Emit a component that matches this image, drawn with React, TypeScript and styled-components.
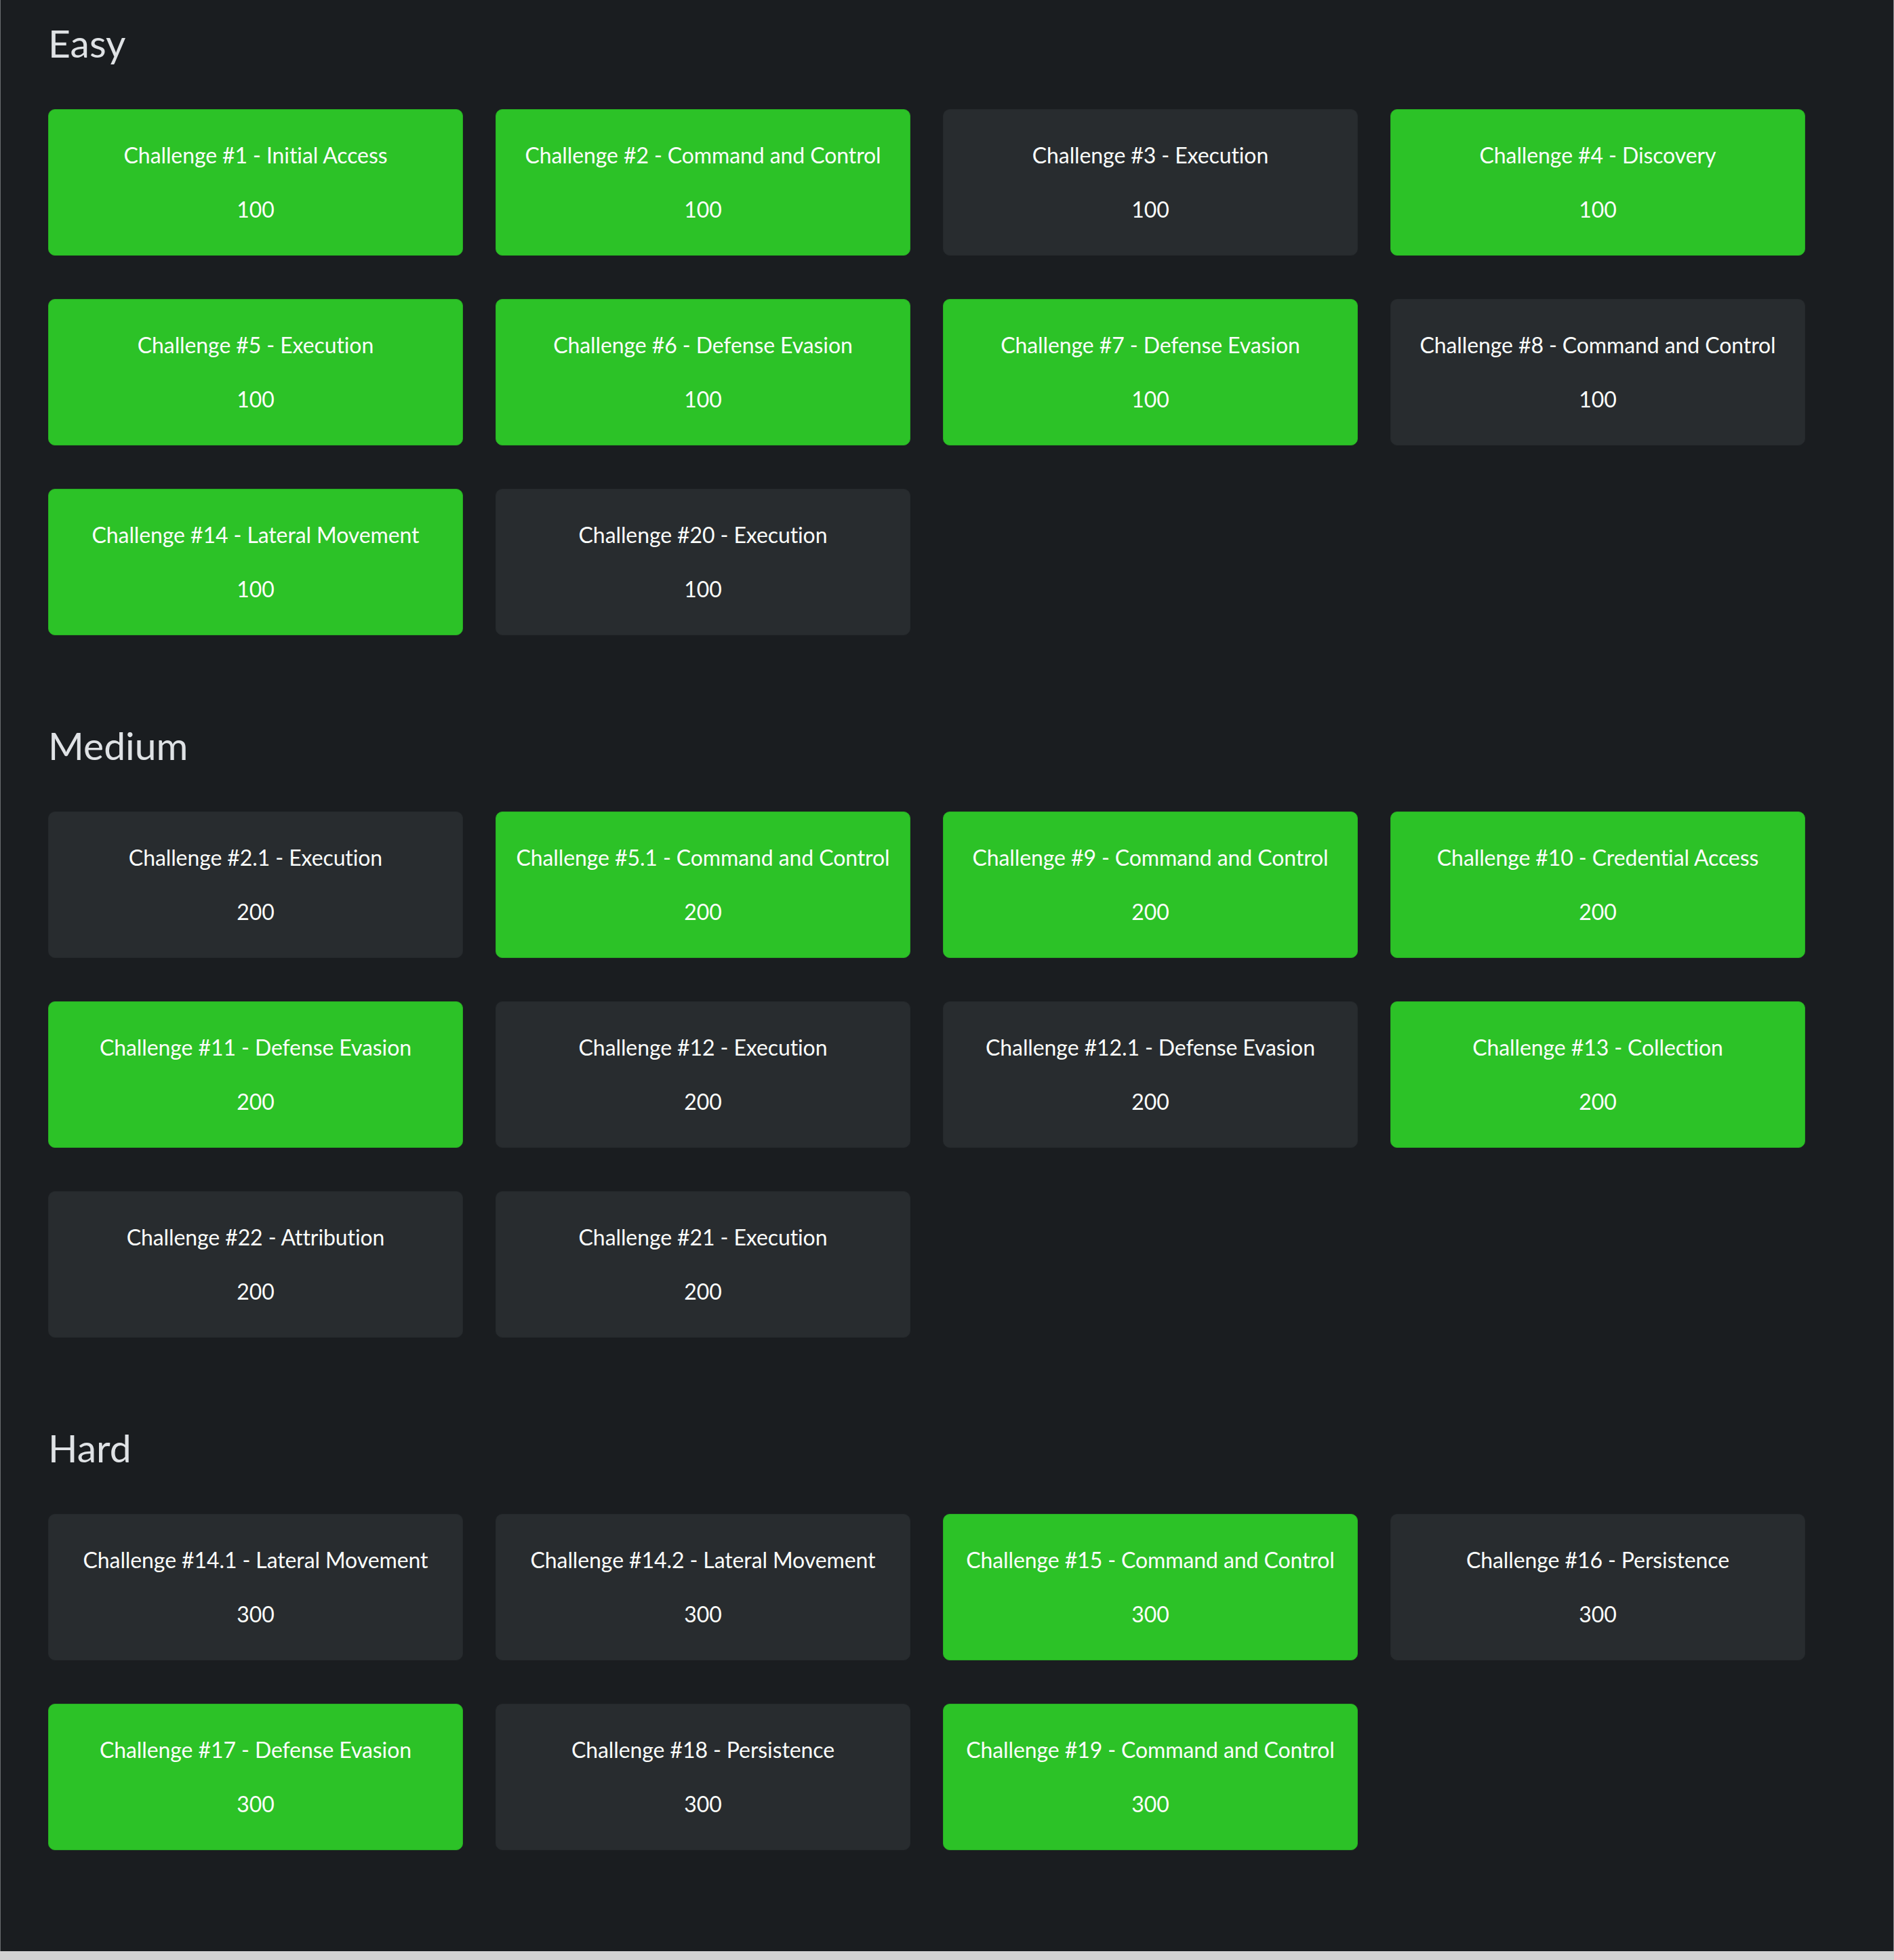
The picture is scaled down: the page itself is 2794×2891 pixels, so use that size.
import styled, { createGlobalStyle } from "styled-components";

type Challenge = {
  id: string;
  name: string;
  solved: boolean;
};

type Category = {
  title: string;
  value: number;
  challenges: Challenge[];
};

const categories: Category[] = [
  {
    title: "Easy",
    value: 100,
    challenges: [
      { id: "1", name: "Initial Access", solved: true },
      { id: "2", name: "Command and Control", solved: true },
      { id: "3", name: "Execution", solved: false },
      { id: "4", name: "Discovery", solved: true },
      { id: "5", name: "Execution", solved: true },
      { id: "6", name: "Defense Evasion", solved: true },
      { id: "7", name: "Defense Evasion", solved: true },
      { id: "8", name: "Command and Control", solved: false },
      { id: "14", name: "Lateral Movement", solved: true },
      { id: "20", name: "Execution", solved: false },
    ],
  },
  {
    title: "Medium",
    value: 200,
    challenges: [
      { id: "2.1", name: "Execution", solved: false },
      { id: "5.1", name: "Command and Control", solved: true },
      { id: "9", name: "Command and Control", solved: true },
      { id: "10", name: "Credential Access", solved: true },
      { id: "11", name: "Defense Evasion", solved: true },
      { id: "12", name: "Execution", solved: false },
      { id: "12.1", name: "Defense Evasion", solved: false },
      { id: "13", name: "Collection", solved: true },
      { id: "22", name: "Attribution", solved: false },
      { id: "21", name: "Execution", solved: false },
    ],
  },
  {
    title: "Hard",
    value: 300,
    challenges: [
      { id: "14.1", name: "Lateral Movement", solved: false },
      { id: "14.2", name: "Lateral Movement", solved: false },
      { id: "15", name: "Command and Control", solved: true },
      { id: "16", name: "Persistence", solved: false },
      { id: "17", name: "Defense Evasion", solved: true },
      { id: "18", name: "Persistence", solved: false },
      { id: "19", name: "Command and Control", solved: true },
    ],
  },
];

const GlobalStyle = createGlobalStyle`
  html, body {
    margin: 0;
    padding: 0;
    background: #d2d2d2;
  }
  * {
    box-sizing: border-box;
  }
`;

const Board = styled.div`
  width: 2794px;
  background: #1a1d20;
  border-left: 1px solid #6a6d70;
  border-right: 1px solid #8a8d90;
  padding: 0 0 149px 70px;
  font-family: Lato, "Open Sans", sans-serif;
  box-shadow: 0 4px 12px rgba(0, 0, 0, 0.45);
`;

const Section = styled.section`
  padding-top: 127px;

  &:first-child {
    padding-top: 28px;
  }
`;

const CategoryTitle = styled.h3`
  margin: 0 0 63px;
  font-size: 57px;
  font-weight: 400;
  line-height: 70px;
  color: #dfe2e5;
`;

const Grid = styled.div`
  display: grid;
  grid-template-columns: repeat(4, 612px);
  column-gap: 48px;
  row-gap: 64px;
`;

const ChallengeButton = styled.button<{ $solved: boolean }>`
  display: flex;
  flex-direction: column;
  align-items: center;
  height: 216px;
  padding: 43px 16px;
  border-radius: 10px;
  border: 1px solid ${(p) => (p.$solved ? "#27ad22" : "#25292c")};
  background: ${(p) => (p.$solved ? "#2cc227" : "#282c2f")};
  color: #fbfdfb;
  font-family: inherit;
  font-size: 32px;
  line-height: 48px;
  letter-spacing: -0.1px;
  white-space: nowrap;
  overflow: hidden;
  cursor: pointer;
`;

const ChallengeName = styled.p`
  margin: 0 0 32px;
`;

const ChallengeValue = styled.span`
  display: block;
`;

export default function App() {
  return (
    <>
      <GlobalStyle />
      <Board>
        {categories.map((category) => (
          <Section key={category.title}>
            <CategoryTitle>{category.title}</CategoryTitle>
            <Grid>
              {category.challenges.map((challenge) => (
                <ChallengeButton key={challenge.id} $solved={challenge.solved}>
                  <ChallengeName>
                    Challenge #{challenge.id} - {challenge.name}
                  </ChallengeName>
                  <ChallengeValue>{category.value}</ChallengeValue>
                </ChallengeButton>
              ))}
            </Grid>
          </Section>
        ))}
      </Board>
    </>
  );
}
